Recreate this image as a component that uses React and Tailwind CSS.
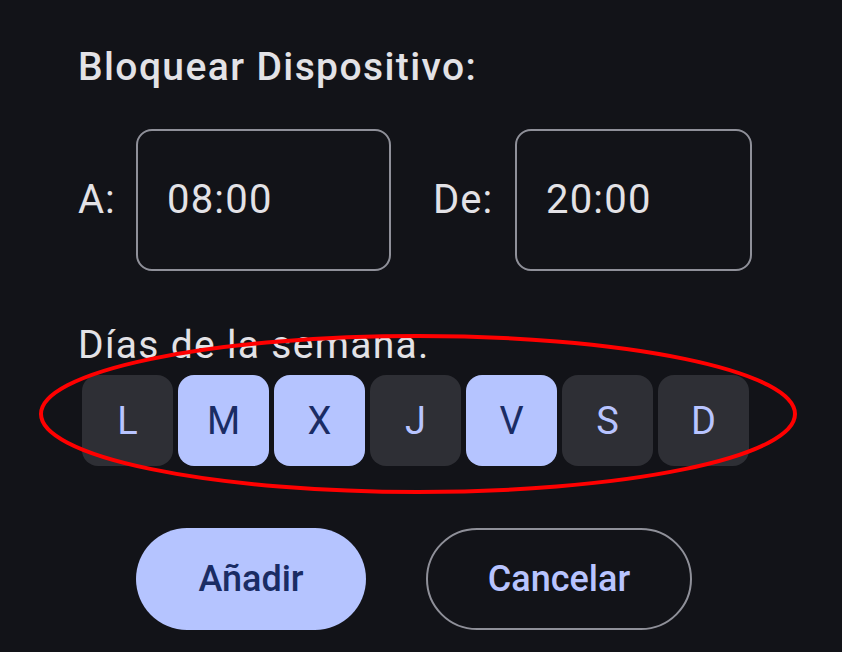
import React from "react";

const days = [
  { l: "L", on: false },
  { l: "M", on: true },
  { l: "X", on: true },
  { l: "J", on: false },
  { l: "V", on: true },
  { l: "S", on: false },
  { l: "D", on: false },
];

export default function App() {
  return (
    <div
      className="relative w-[842px] h-[652px] bg-[#121318] overflow-hidden text-[#e3e2e6]"
      style={{ fontFamily: "Roboto, 'Noto Sans', sans-serif" }}
    >
      <div className="flex flex-col pl-[78px]">
        <div className="mt-[45px] h-[44px] flex items-center text-[39px] tracking-[1.4px] font-medium leading-none">
          Bloquear Dispositivo:
        </div>
        <div className="mt-[40px] flex items-center">
          <div className="w-[58px] text-[40px] tracking-[1px] leading-none">A:</div>
          <div className="w-[255px] h-[142px] rounded-[16px] border-2 border-[#8f9099] flex items-center pl-[29px] text-[40px] tracking-[1.2px] leading-none">
            08:00
          </div>
          <div className="ml-[42px] w-[82px] text-[40px] tracking-[1px] leading-none">De:</div>
          <div className="w-[237px] h-[142px] rounded-[16px] border-2 border-[#8f9099] flex items-center pl-[29px] text-[40px] tracking-[1.2px] leading-none">
            20:00
          </div>
        </div>
        <div className="mt-[54px] h-[40px] flex items-center text-[39px] tracking-[1.3px] leading-none">
          Días de la semana.
        </div>
        <div className="mt-[10px] ml-[4px] flex gap-[5px]">
          {days.map((d) => (
            <div
              key={d.l}
              className={
                d.on
                  ? "w-[91px] h-[91px] rounded-[16px] bg-[#b5c4ff] text-[#1a2c64] flex items-center justify-center text-[38px] leading-none"
                  : "w-[91px] h-[91px] rounded-[16px] bg-[#2e2f35] text-[#b8c4ff] flex items-center justify-center text-[38px] leading-none"
              }
            >
              {d.l}
            </div>
          ))}
        </div>
        <div className="mt-[62px] ml-[58px] flex gap-[60px]">
          <div className="w-[230px] h-[102px] rounded-full bg-[#b5c4ff] text-[#1a2c64] flex items-center justify-center text-[36px] font-medium leading-none">
            Añadir
          </div>
          <div className="w-[266px] h-[102px] rounded-full border-2 border-[#8f9099] text-[#b8c4ff] flex items-center justify-center text-[36px] font-medium leading-none">
            Cancelar
          </div>
        </div>
      </div>
      <svg className="absolute left-0 top-0 pointer-events-none" width="842" height="652">
        <ellipse cx="418" cy="414" rx="377" ry="78" fill="none" stroke="#ff0000" strokeWidth="4" />
      </svg>
    </div>
  );
}
